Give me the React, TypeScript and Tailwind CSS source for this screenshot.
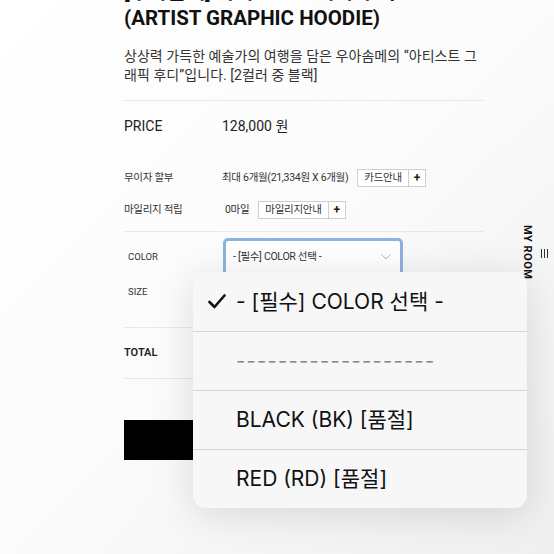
import React from "react";

function InfoButton({ label }: { label: string }) {
  return (
    <div className="flex h-[18px] items-stretch border border-[#cfcfcf] bg-white text-[10.5px] text-[#333]">
      <span className="flex items-center px-[6px] tracking-[-0.3px]">{label}</span>
      <span className="flex w-[17px] items-center justify-center border-l border-[#cfcfcf] text-[12px] font-bold text-[#222]">+</span>
    </div>
  );
}

export default function App() {
  return (
    <div className="relative h-[554px] w-[554px] overflow-hidden bg-linear-to-br from-white via-[#fbfbfb] to-[#efefef] font-['Roboto','Noto_Sans_CJK_KR',sans-serif] text-[#222]">
      <div className="ml-[124px] w-[360px]">
        <h1 className="-mt-[21px] text-[20.5px] font-bold leading-[26px] text-[#111]">
          [우아솜메] 아티스트 그래픽 후디
          <br />
          (ARTIST GRAPHIC HOODIE)
        </h1>
        <p className="mt-[16px] text-[14px] leading-[19px] tracking-[0.05px] text-[#333]">
          상상력 가득한 예술가의 여행을 담은 우아솜메의 “아티스트 그
          <br />
          래픽 후디”입니다. [2컬러 중 블랙]
        </p>
        <div className="mt-[15px] border-t border-[#e8e8e8]" />

        <div className="mt-[15px] flex h-[20px] items-center text-[14px] text-[#222]">
          <span className="w-[98px]">PRICE</span>
          <span>128,000 원</span>
        </div>

        <div className="mt-[33px] flex h-[18px] items-center text-[10.5px] tracking-[-0.3px] text-[#333]">
          <span className="w-[98px]">무이자 할부</span>
          <span className="mr-[9px]">최대 6개월(21,334원 X 6개월)</span>
          <InfoButton label="카드안내" />
        </div>

        <div className="mt-[14px] flex h-[18px] items-center text-[10.5px] tracking-[-0.3px] text-[#333]">
          <span className="w-[101px]">마일리지 적립</span>
          <span className="mr-[9px]">0마일</span>
          <InfoButton label="마일리지안내" />
        </div>

        <div className="mt-[12px] border-t border-[#e8e8e8]" />

        <div className="mt-[6px] flex h-[38px] items-center text-[9.5px] text-[#333]">
          <span className="w-[99px] pl-[4px]">COLOR</span>
          <div className="flex h-[38px] w-[180px] items-center justify-between rounded-[5px] border-[3px] border-[#8fb2dd] bg-white pl-[7px] pr-[9px]">
            <span className="text-[10.5px] tracking-[-0.3px] text-[#333]">- [필수] COLOR 선택 -</span>
            <svg width="10" height="6" viewBox="0 0 10 6" fill="none">
              <path d="M0.5 0.5 L5 5 L9.5 0.5" stroke="#b8b8b8" strokeWidth="1" />
            </svg>
          </div>
        </div>

        <div className="flex h-[32px] items-center text-[9.5px] text-[#333]">
          <span className="pl-[4px]">SIZE</span>
        </div>

        <div className="mt-[19px] border-t border-[#e8e8e8]" />

        <div className="mt-[18px] flex h-[14px] items-center text-[11px] font-semibold text-[#222]">TOTAL</div>

        <div className="mt-[18px] border-t border-[#e8e8e8]" />

        <div className="mt-[41px] h-[40px] w-[356px] bg-black" />
      </div>

      {/* peeking marks under dropdown */}
      <div className="absolute left-[447px] top-[504px] h-[4px] w-[3px] bg-[#222]" />
      <div className="absolute left-[466px] top-[505px] h-[3px] w-[11px] -skew-x-12 rounded-sm bg-[#222]" />

      {/* side MY ROOM */}
      <div className="absolute left-[520px] top-[225px] flex flex-col items-center">
        <span className="text-[11px] font-bold leading-[14px] tracking-[0.5px] text-[#111] [writing-mode:vertical-rl]">MY ROOM</span>
      </div>
      <div className="absolute left-[541px] top-[249px] flex gap-[2px]">
        <div className="h-[9px] w-[1px] bg-[#333]" />
        <div className="h-[9px] w-[1px] bg-[#333]" />
        <div className="h-[9px] w-[1px] bg-[#333]" />
      </div>

      {/* iOS picker dropdown */}
      <div className="absolute left-[193px] top-[272px] w-[334px] overflow-hidden rounded-[13px] bg-[#f7f7f7] font-['Inter','Noto_Sans_CJK_KR',sans-serif] text-[21px] text-[#111] shadow-[0_6px_40px_rgba(0,0,0,0.13)]">
        <div className="flex h-[59px] items-center">
          <div className="flex w-[43px] justify-end pr-[10px]">
            <svg width="18" height="15" viewBox="0 0 18 15" fill="none">
              <path d="M1.5 8 L6.5 13 L16.5 1.5" stroke="#111" strokeWidth="2.6" strokeLinecap="round" strokeLinejoin="round" />
            </svg>
          </div>
          <span>- [필수] COLOR 선택 -</span>
        </div>
        <div className="border-t border-[#d6d6d6]" />
        <div className="flex h-[58px] items-center pl-[43px] text-[20px] tracking-[1.3px] text-[#8a8a8a]">-------------------</div>
        <div className="border-t border-[#d6d6d6]" />
        <div className="flex h-[58px] items-center pl-[43px]">BLACK (BK) [품절]</div>
        <div className="border-t border-[#d6d6d6]" />
        <div className="flex h-[58px] items-center pl-[43px]">RED (RD) [품절]</div>
      </div>
    </div>
  );
}
